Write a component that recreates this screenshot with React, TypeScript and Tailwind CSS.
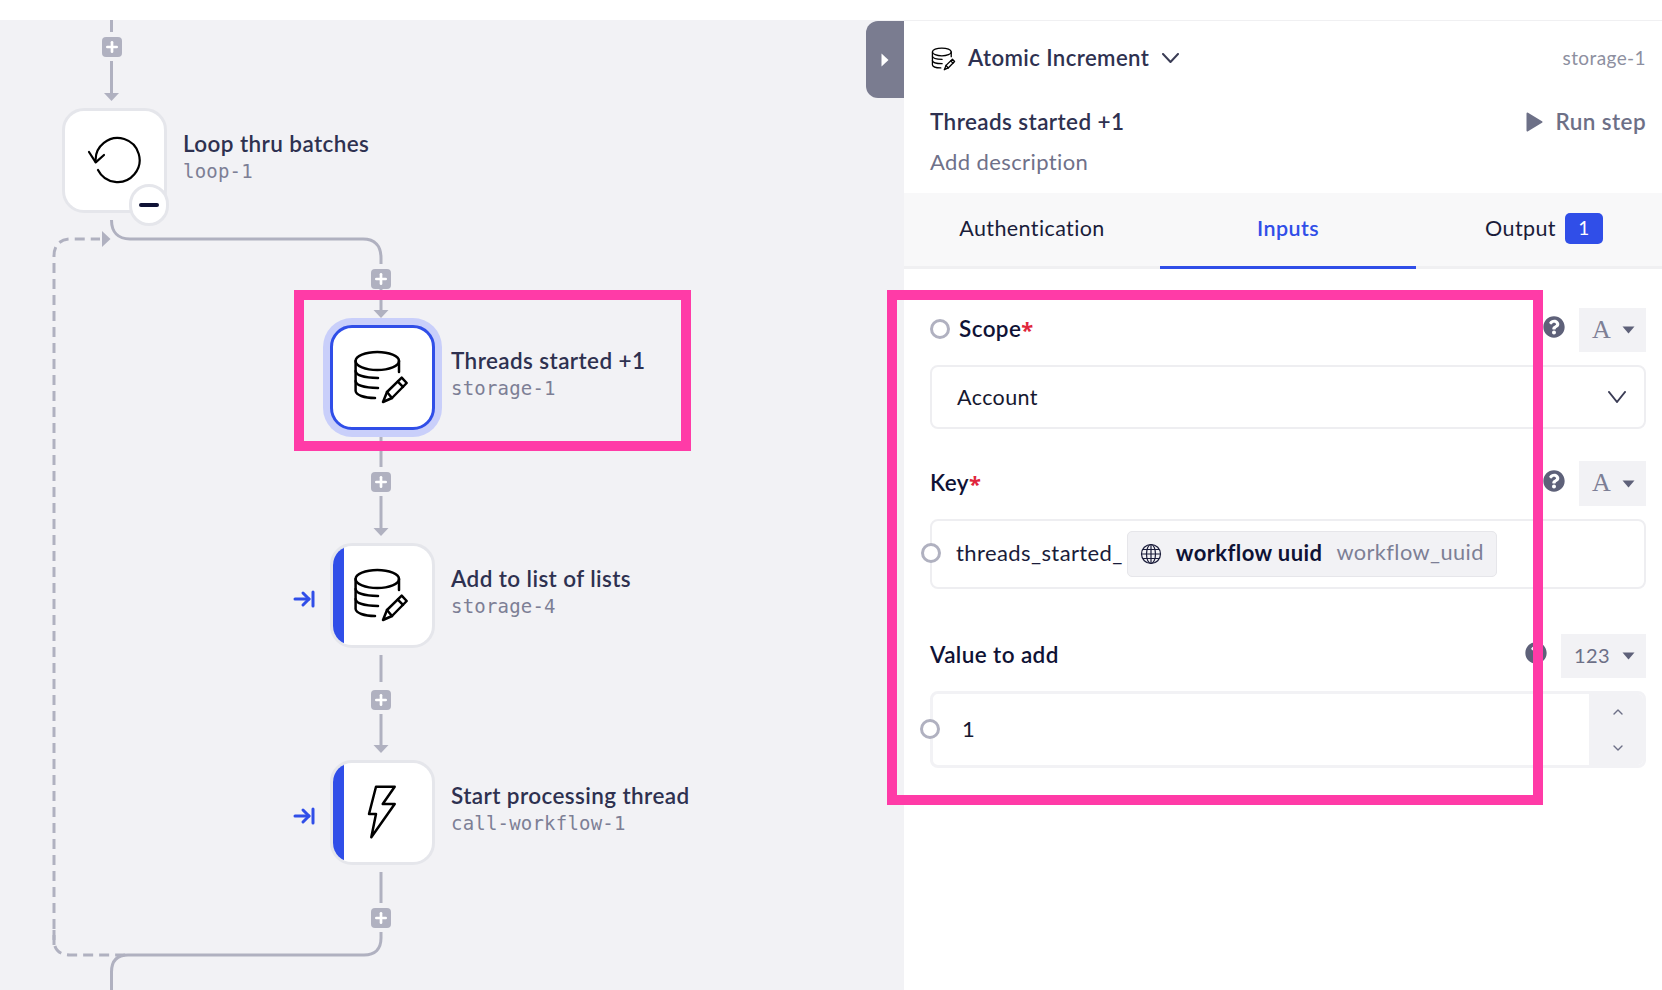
import React from "react";
import { ArrowRightToLine, Plus } from "lucide-react";
import { FaQuestionCircle } from "react-icons/fa";

const StorageIcon: React.FC<{ size?: number; stroke?: number }> = ({ size = 60, stroke = 2.5 }) => (
    <svg width={size} height={size} viewBox="0 0 60 60" fill="none" stroke="#000" strokeWidth={stroke} strokeLinecap="round" strokeLinejoin="round">
        <ellipse cx="27.3" cy="16" rx="21.7" ry="9" />
        <path d="M5.6 16V46C6 50 14 53 25 53" />
        <path d="M5.6 26C6 30 14 33 28 33" />
        <path d="M5.6 36C6 40 14 43 28 43" />
        <path d="M49 16V27" />
        <path d="M33 57L37 47L51.7 32.7L56.7 38L42 53L33 57Z" />
        <path d="M47.8 36.6L53 41.8" />
        <path d="M37 47L42 53" />
    </svg>
);

const LoopIcon = () => (
    <svg width="60" height="60" viewBox="-3 -3 60 60" fill="none" stroke="#000" strokeWidth="2.2" strokeLinecap="round" strokeLinejoin="round">
        <path d="M13 39A22 22 0 1 0 10.7 31" />
        <path d="M4 21L10.7 31.3L19 24" />
    </svg>
);

const BoltIcon = () => (
    <svg width="60" height="60" viewBox="0 0 60 60" fill="none" stroke="#000" strokeWidth="2.5" strokeLinejoin="round" strokeLinecap="round">
        <path d="M26 6.7H44.7L32.7 24H44.7L21.3 57.3L26 34H19Z" />
    </svg>
);

const Node: React.FC<{
    title: string;
    slug: string;
    icon: React.ReactNode;
    className: string;
    selected?: boolean;
    accent?: boolean;
}> = ({ title, slug, icon, className, selected, accent }) => (
    <div className={`absolute flex items-center gap-[16px] ${className}`}>
        <div
            className={`relative flex h-[105px] w-[105px] items-center justify-center overflow-hidden rounded-[22px] border-[3px] bg-white ${
                selected ? "border-[#304ee8] shadow-[0_0_0_7px_#c9cffa]" : "border-[#e5e6eb]"
            }`}
        >
            {accent && <div className="absolute inset-y-0 left-0 w-[11px] bg-[#304ee8]" />}
            <div className="-ml-[5px] -mt-[5px] flex">{icon}</div>
        </div>
        <div className="mb-[8px] flex flex-col whitespace-nowrap">
            <span className="text-[22.5px] leading-[29px] font-semibold text-[#2e3150]">{title}</span>
            <span className="font-['DejaVu_Sans_Mono',monospace] text-[19px] leading-[27px] tracking-[0.2px] text-[#7d7f95]">{slug}</span>
        </div>
    </div>
);

const AddButton: React.FC<{ className: string }> = ({ className }) => (
    <div className={`absolute flex h-[20px] w-[20px] items-center justify-center rounded-[4px] bg-[#b0b1c0] ${className}`}>
        <Plus size={16} strokeWidth={4} color="#fff" />
    </div>
);

const Caret = () => (
    <svg width="13" height="8" viewBox="0 0 13 8">
        <path d="M0.5 0.5H12.5L6.5 7.5Z" fill="#5e6179" />
    </svg>
);

const Chevron: React.FC<{ w: number; h: number; color?: string; up?: boolean; stroke?: number }> = ({ w, h, color = "#3a3c55", up, stroke = 2 }) => (
    <svg width={w} height={h} viewBox={`0 0 ${w} ${h}`} fill="none" stroke={color} strokeWidth={stroke} strokeLinecap="round" strokeLinejoin="round">
        <path d={up ? `M1 ${h - 1}L${w / 2} 1L${w - 1} ${h - 1}` : `M1 1L${w / 2} ${h - 1}L${w - 1} 1`} />
    </svg>
);

const FieldRow: React.FC<{ children: React.ReactNode; type: string; wide?: boolean; className: string }> = ({ children, type, wide, className }) => (
    <div className={`flex items-center justify-between ${className}`}>
        <div className="-mt-[2px] flex items-center text-[22.5px] font-semibold text-[#0f1235]">{children}</div>
        <div className="flex h-full items-center gap-[14px]">
            <FaQuestionCircle size={22} color="#5e6179" className="-mt-[6px]" />
            <div className={`flex h-full items-center justify-between bg-[#f2f2f5] pr-[11px] ${wide ? "w-[85px] pl-[13px]" : "w-[67px] pl-[13px]"}`}>
                <span className={wide ? "pb-[2px] text-[20px] text-[#6d7087]" : "pb-[2px] font-['Liberation_Serif',serif] text-[26px] text-[#7d7f95]"}>{type}</span>
                <Caret />
            </div>
        </div>
    </div>
);

const Port = () => <span className="block h-[20px] w-[20px] rounded-full border-[3px] border-[#b0b1c0] bg-white" />;

const Required = () => <span className="font-['Noto_Sans',sans-serif] text-[22px] leading-none font-bold text-[#e0263c]">*</span>;

export default function App() {
    return (
        <div className="relative flex h-screen w-full flex-col overflow-hidden bg-white font-['Lato','Noto_Sans',sans-serif] tracking-[0.4px]">
            <div className="h-[20px] shrink-0 bg-white" />

            <div className="flex min-h-0 flex-1">
                {/* workflow canvas */}
                <div className="relative w-[904px] shrink-0 overflow-hidden bg-[#f2f2f5]">
                    <svg className="absolute left-0 top-[-20px]" width="904" height="990" fill="none" stroke="#b0b1c0" strokeWidth="3">
                        <path d="M111.5 20V32M111.5 61V94" />
                        <path d="M111.5 220C111.5 232 118 239 130 239H363C375 239 381 246 381 258V264" />
                        <path d="M381 289V311" />
                        <path d="M381 437V467M381 496V530" />
                        <path d="M381 655V682M381 714V747" />
                        <path d="M381 872V903M381 932V938C381 949 375 955 364 955H128C117 955 111.5 961 111.5 972V990" />
                        <path d="M54 945V256C54 245 60 239 71 239H100" strokeDasharray="10 6" />
                        <path d="M54 930V940C54 950 60 955 70 955H130" strokeDasharray="10 6" />
                        <g fill="#b0b1c0" stroke="none">
                            <path d="M104 93H119L111.5 101Z" />
                            <path d="M373.5 310H388.5L381 318Z" />
                            <path d="M373.5 528H388.5L381 536Z" />
                            <path d="M373.5 745H388.5L381 753Z" />
                            <path d="M102 231L110.5 239L102 247Z" />
                        </g>
                    </svg>

                    <AddButton className="left-[102px] top-[17px]" />
                    <AddButton className="left-[371px] top-[249px]" />
                    <AddButton className="left-[371px] top-[452px]" />
                    <AddButton className="left-[371px] top-[670px]" />
                    <AddButton className="left-[371px] top-[888px]" />

                    <Node className="left-[62px] top-[88px]" title="Loop thru batches" slug="loop-1" icon={<LoopIcon />} />
                    <div className="absolute left-[129px] top-[164px] flex h-[42px] w-[40px] items-center justify-center rounded-full border-[3px] border-[#e5e6eb] bg-white">
                        <span className="h-[4px] w-[20px] rounded-full bg-[#0f1235]" />
                    </div>

                    <Node selected className="left-[330px] top-[305px]" title="Threads started +1" slug="storage-1" icon={<StorageIcon />} />

                    <ArrowRightToLine size={24} strokeWidth={3} color="#304ee8" className="absolute left-[292px] top-[567px]" />
                    <Node accent className="left-[330px] top-[523px]" title="Add to list of lists" slug="storage-4" icon={<StorageIcon />} />

                    <ArrowRightToLine size={24} strokeWidth={3} color="#304ee8" className="absolute left-[292px] top-[784px]" />
                    <Node accent className="left-[330px] top-[740px]" title="Start processing thread" slug="call-workflow-1" icon={<BoltIcon />} />

                    {/* panel toggle */}
                    <div className="absolute right-0 top-[1px] flex h-[77px] w-[38px] items-center justify-center rounded-l-[12px] bg-[#7a7c90]">
                        <svg width="8" height="14" viewBox="0 0 8 14">
                            <path d="M0.5 0.5L7.5 7L0.5 13.5Z" fill="#fff" />
                        </svg>
                    </div>
                </div>

                {/* step panel */}
                <div className="flex min-w-0 flex-1 flex-col border-t border-[#f0f0f2] bg-white">
                    <div className="flex h-[77px] items-center justify-between pb-[3px] pl-[26px] pr-[16px]">
                        <div className="flex items-center">
                            <StorageIcon size={26} stroke={3} />
                            <span className="ml-[12px] text-[22.2px] font-semibold text-[#2e3150]">Atomic Increment</span>
                            <span className="ml-[13px]">
                                <Chevron w={17} h={10} />
                            </span>
                        </div>
                        <span className="text-[19px] text-[#8d8fa0]">storage-1</span>
                    </div>

                    <div className="flex h-[48px] items-center justify-between pl-[26px] pr-[16px]">
                        <span className="text-[22.5px] font-semibold text-[#2e3150]">Threads started +1</span>
                        <div className="flex items-center gap-[13px]">
                            <svg width="17" height="20" viewBox="0 0 17 20">
                                <path d="M1.5 1.5L15.5 10L1.5 18.5Z" fill="#6d7087" stroke="#6d7087" strokeWidth="2" strokeLinejoin="round" />
                            </svg>
                            <span className="text-[22.5px] font-semibold text-[#6d7087]">Run step</span>
                        </div>
                    </div>

                    <div className="mb-[17px] flex h-[30px] items-center pl-[26px] pt-[1px] text-[22px] text-[#6f7189]">Add description</div>

                    <div className="grid h-[76px] grid-cols-[256px_256px_246px] border-b-[3px] border-[#f0f0f2] bg-[#f8f8f9] text-[21.5px]">
                        <div className="flex items-center justify-center pb-[2px] text-[#1a1c3a]">Authentication</div>
                        <div className="-mb-[3px] flex items-center justify-center border-b-[3px] border-[#304ee8] pb-[2px] font-semibold text-[#304ee8]">Inputs</div>
                        <div className="flex items-center justify-center gap-[9px] pb-[2px] pl-[10px] text-[#1a1c3a]">
                            Output
                            <span className="flex h-[31px] w-[38px] items-center justify-center rounded-[5px] bg-[#304ee8] text-[19px] text-white">1</span>
                        </div>
                    </div>

                    <div className="flex flex-col pl-[26px] pr-[16px] pt-[39px]">
                        <FieldRow type="A" className="h-[44px]">
                            <Port />
                            <span className="ml-[9px]">Scope</span>
                            <Required />
                        </FieldRow>
                        <div className="mt-[13px] flex h-[64px] items-center justify-between rounded-[8px] border-2 border-[#eeeef1] pl-[25px] pr-[18px] text-[21.5px] text-[#16182f]">
                            <span className="pt-[1px]">Account</span>
                            <Chevron w={18} h={12} />
                        </div>

                        <FieldRow type="A" className="mt-[32px] h-[45px]">
                            <span>Key</span>
                            <Required />
                        </FieldRow>
                        <div className="relative mt-[13px] flex h-[70px] items-center rounded-[8px] border-2 border-[#eeeef1] pl-[24px] text-[22px] text-[#1a1c3a]">
                            <div className="absolute left-[-11px] top-[22px]">
                                <Port />
                            </div>
                            <span className="pb-[3px]">threads_started_</span>
                            <div className="ml-[4px] flex h-[46px] w-[370px] items-center rounded-[5px] border border-[#e6e6ea] bg-[#f2f2f5] pl-[12px]">
                                <svg width="22" height="22" viewBox="0 0 22 22" fill="none" stroke="#1a1c3a" strokeWidth="1.2">
                                    <circle cx="11" cy="11" r="9.5" />
                                    <ellipse cx="11" cy="11" rx="4.5" ry="9.5" />
                                    <path d="M11 1.5V20.5M1.5 11H20.5M3 6.5H19M3 15.5H19" />
                                </svg>
                                <span className="ml-[14px] pb-[3px] font-bold text-[#0f1235]">workflow uuid</span>
                                <span className="ml-[14px] pb-[3px] text-[21.8px] text-[#7d7f95]">workflow_uuid</span>
                            </div>
                        </div>

                        <FieldRow type="123" wide className="mt-[45px] h-[44px]">
                            <span>Value to add</span>
                        </FieldRow>
                        <div className="relative mt-[13px] flex h-[77px] overflow-hidden rounded-[8px] border-[3px] border-[#f2f2f5] text-[22px] text-[#16182f]">
                            <div className="flex flex-1 items-center pb-[2px] pl-[29px]">1</div>
                            <div className="flex w-[54px] flex-col items-center justify-center gap-[30px] bg-[#f2f2f5] pl-[3px]">
                                <Chevron w={10} h={6} color="#6d7087" up stroke={1.4} />
                                <Chevron w={10} h={6} color="#6d7087" stroke={1.4} />
                            </div>
                        </div>
                        <div className="relative -mt-[49px] ml-[-10px] h-[20px] w-[20px]">
                            <Port />
                        </div>
                    </div>
                </div>
            </div>

            {/* annotation frames */}
            <div className="pointer-events-none absolute left-[294px] top-[290px] h-[161px] w-[397px] border-[10px] border-[#ff3ba7]" />
            <div className="pointer-events-none absolute left-[887px] top-[290px] h-[515px] w-[656px] border-[10px] border-[#ff3ba7]" />
        </div>
    );
}
